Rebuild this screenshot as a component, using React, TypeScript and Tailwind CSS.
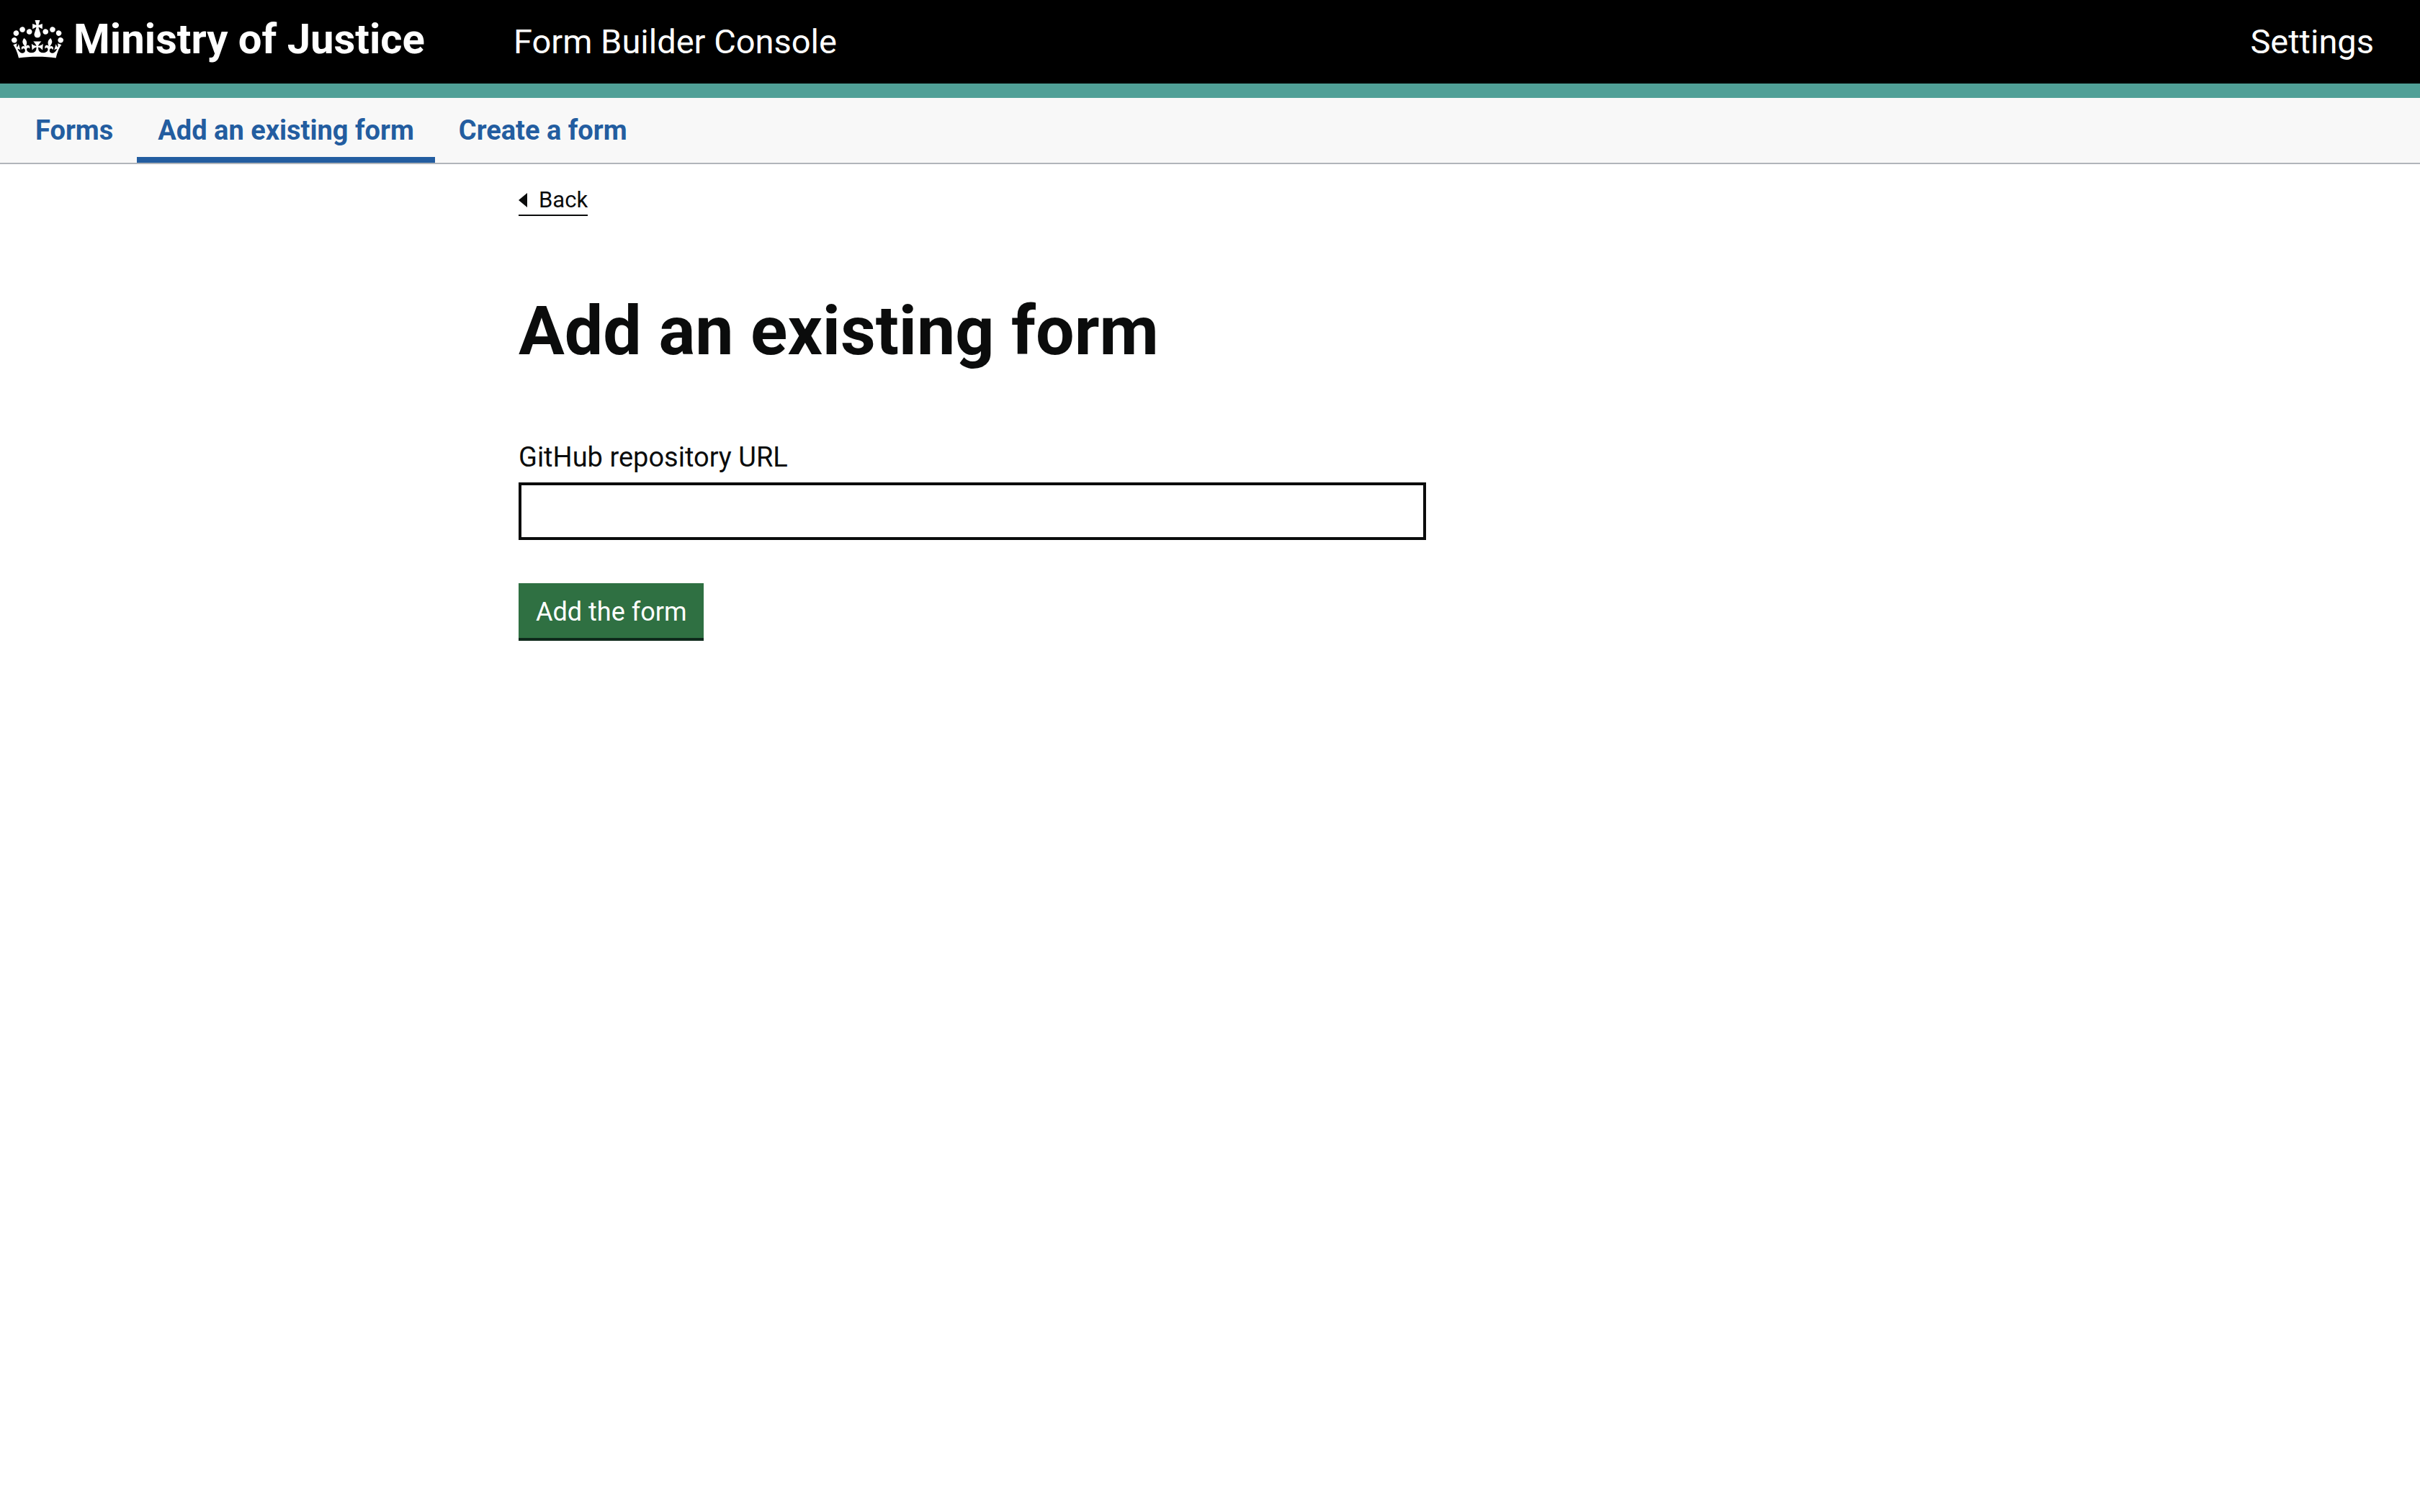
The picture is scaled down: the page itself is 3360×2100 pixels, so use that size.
import React from "react";

function Crown() {
  return (
    <svg viewBox="0 0 132 97" className="h-[53px] w-[72px] shrink-0" fill="currentColor" aria-hidden="true">
      <path
        fillRule="evenodd"
        d="M25 30.2c3.5 1.5 7.7-.2 9.1-3.7 1.5-3.6-.2-7.8-3.9-9.2-3.6-1.4-7.6.3-9.1 3.9-1.4 3.5.3 7.5 3.9 9zM9 39.5c3.6 1.5 7.8-.2 9.2-3.7 1.5-3.6-.2-7.8-3.9-9.1-3.6-1.5-7.6.2-9.1 3.8-1.4 3.5.3 7.5 3.8 9zM4.4 57.2c3.5 1.5 7.7-.2 9.1-3.8 1.5-3.6-.2-7.7-3.9-9.1-3.5-1.5-7.6.3-9.1 3.8-1.4 3.5.3 7.6 3.9 9.1zm38.3-21.4c3.5 1.5 7.7-.2 9.1-3.8 1.5-3.6-.2-7.7-3.9-9.1-3.6-1.5-7.6.3-9.1 3.8-1.3 3.6.4 7.7 3.9 9.1zm64.4-5.6c-3.6 1.5-7.8-.2-9.1-3.7-1.5-3.6.2-7.8 3.8-9.2 3.6-1.4 7.7.3 9.2 3.9 1.3 3.5-.4 7.5-3.9 9zm15.9 9.3c-3.6 1.5-7.7-.2-9.1-3.7-1.5-3.6.2-7.8 3.7-9.1 3.6-1.5 7.7.2 9.2 3.8 1.5 3.5-.3 7.5-3.8 9zm4.7 17.7c-3.6 1.5-7.8-.2-9.2-3.8-1.5-3.6.2-7.7 3.9-9.1 3.6-1.5 7.7.3 9.2 3.8 1.3 3.5-.4 7.6-3.9 9.1zM89.3 35.8c-3.6 1.5-7.8-.2-9.2-3.8-1.4-3.6.2-7.7 3.9-9.1 3.6-1.5 7.7.3 9.2 3.8 1.4 3.6-.3 7.7-3.9 9.1zM69.7 17.7l8.9 4.7V9.3l-8.9 2.8c-.2-.3-.5-.6-.9-.9L72.4 0H59.6l3.5 11.2c-.3.3-.6.5-.9.9l-8.8-2.8v13.1l8.8-4.7c.3.3.6.7.9.9l-5 15.4v.1c-.2.8-.4 1.6-.4 2.4 0 4.1 3.1 7.5 7 8.1h.2c.3 0 .7.1 1 .1.4 0 .7 0 1-.1h.2c4-.6 7.1-4.1 7.1-8.1 0-.8-.1-1.7-.4-2.4V34l-5.1-15.4c.4-.2.7-.6 1-.9zM66 92.8c16.9 0 32.8 1.1 47.1 3.2 4-16.9 8.9-26.7 14-33.5l-9.6-3.4c1 4.9 1.1 7.2 0 10.2-1.5-1.4-3-4.3-4.2-8.7L108.6 76c2.8-2 5-3.2 7.5-3.3-4.4 9.4-10 11.9-13.6 11.2-4.3-.8-6.3-4.6-5.6-7.9 1-4.7 5.7-5.9 8-.5 4.3-8.7-3-11.4-7.6-8.8 7.1-7.2 7.9-13.5 2.1-21.1-8 6.1-8.1 12.3-4.5 20.8-4.7-5.4-12.1-2.5-9.5 6.2 3.4-5.2 7.9-2 7.2 3.1-.6 4.3-6.4 7.8-13.5 7.2-10.3-.9-10.9-8-11.2-13.8 2.5-.5 7.1 1.8 11 7.3L80.2 60c-4.1 4.4-8 5.3-12.3 5.4 1.4-4.4 8-11.6 8-11.6H55.5s6.4 7.2 7.9 11.6c-4.2-.1-8-1-12.3-5.4l1.4 16.4c3.9-5.5 8.5-7.7 10.9-7.3-.3 5.8-.9 12.8-11.1 13.8-7.2.6-12.9-2.9-13.5-7.2-.7-5 3.8-8.3 7.1-3.1 2.7-8.7-4.6-11.6-9.4-6.2 3.7-8.5 3.6-14.7-4.6-20.8-5.8 7.6-5 13.9 2.2 21.1-4.7-2.6-11.9.1-7.7 8.8 2.3-5.5 7.1-4.2 8.1.5.7 3.3-1.3 7.1-5.7 7.9-3.5.7-9-1.8-13.5-11.2 2.5.1 4.7 1.3 7.5 3.3l-4.7-15.4c-1.2 4.4-2.7 7.2-4.3 8.7-1.1-3-.9-5.3 0-10.2l-9.5 3.4c5 6.9 9.9 16.7 14 33.5 14.8-2.1 30.8-3.2 47.7-3.2z"
      />
    </svg>
  );
}

const tabs = [
  { label: "Forms", current: false },
  { label: "Add an existing form", current: true },
  { label: "Create a form", current: false },
];

export default function App() {
  return (
    <div className="min-h-screen bg-white font-['Roboto',sans-serif] text-[#0b0c0c]">
      <header className="flex items-start border-b-[20px] border-[#50a097] bg-black pr-16 pl-4 text-[47px] leading-[116px] text-white">
        <a href="#" className="flex w-[697px] shrink-0 items-center gap-[14px] pt-6 text-[58px] leading-[60px] font-bold whitespace-nowrap">
          <Crown />
          <span>Ministry of Justice</span>
        </a>
        <a href="#" className="whitespace-nowrap">Form Builder Console</a>
        <a href="#" className="ml-auto">Settings</a>
      </header>

      <nav aria-label="Primary" className="border-b-2 border-[#b1b5ba] bg-[#f8f8f8] pl-5">
        <ul className="flex gap-1">
          {tabs.map((tab) => (
            <li key={tab.label}>
              <a
                href="#"
                aria-current={tab.current ? "page" : undefined}
                className={
                  "block h-[90px] px-[29px] text-[38px] leading-[90px] font-bold whitespace-nowrap text-[#235da0] " +
                  (tab.current ? "shadow-[inset_0_-8px_0_#235da0]" : "")
                }
              >
                {tab.label}
              </a>
            </li>
          ))}
        </ul>
      </nav>

      <div className="mx-auto max-w-[1920px] pt-[30px]">
        <a href="#" className="inline-flex items-center gap-4 border-b-2 border-[#0b0c0c] text-[31px] leading-[40px] align-top">
          <svg viewBox="0 0 12 20" className="h-5 w-3" fill="currentColor" aria-hidden="true">
            <path d="M0 10 12 0v20z" />
          </svg>
          Back
        </a>
        <main className="w-2/3 pt-[110px] pr-5">
          <h1 className="text-[95px] leading-[100px] font-bold">Add an existing form</h1>
          <form className="pt-[100px]" onSubmit={(e) => e.preventDefault()}>
            <label htmlFor="repository-url" className="mb-[10px] block text-[38px] leading-[50px]">
              GitHub repository URL
            </label>
            <input
              id="repository-url"
              type="text"
              className="block h-20 w-full border-4 border-[#0b0c0c] bg-white px-2 text-[38px]"
            />
            <button
              type="submit"
              className="mt-[60px] block h-20 border-b-4 border-[#0f2a1c] bg-[#2f7042] px-6 pt-[3px] text-[36px] text-white"
            >
              Add the form
            </button>
          </form>
        </main>
      </div>
    </div>
  );
}
